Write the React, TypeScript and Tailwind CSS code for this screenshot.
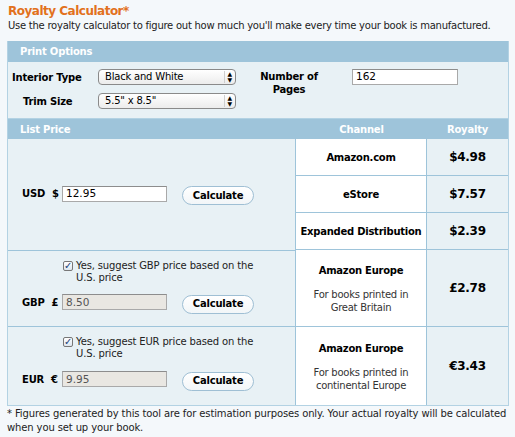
import { useState } from "react";

const font = { fontFamily: '"DejaVu Sans", Verdana, sans-serif' };

function Select({ value, width }: { value: string; width: string }) {
  return (
    <div
      className={`flex h-[16px] ${width} items-center justify-between rounded-[4px] border border-[#8a8a8a] bg-gradient-to-b from-white to-[#ececec] pl-[6px] pr-[3px] text-[10px] leading-none tracking-[-0.2px] text-black`}
    >
      <span>{value}</span>
      <span className="flex flex-col items-center border-l border-[#cfcfcf] pl-[3px] text-[6px] leading-[6px]">
        <span>▲</span>
        <span>▼</span>
      </span>
    </div>
  );
}

function CalcButton() {
  return (
    <button className="h-[19px] w-[72px] rounded-full border border-[#9fbfd4] bg-gradient-to-b from-white to-[#f2f6f8] text-[10px] font-bold leading-none tracking-[-0.2px] text-black">
      Calculate
    </button>
  );
}

function PriceInput({ value, disabled }: { value: string; disabled?: boolean }) {
  return (
    <div
      className={`flex h-[16px] w-[105px] items-center border border-[#a9a9a9] border-t-[#8d8d8d] px-[3px] text-[10.5px] leading-none ${
        disabled ? "bg-[#e9e7e2] text-[#555]" : "bg-white text-black"
      }`}
    >
      {value}
    </div>
  );
}

function Check({ text }: { text: string }) {
  return (
    <div className="flex gap-[3px] pl-[55px] text-[10px] leading-[12px] tracking-[-0.15px] text-[#222]">
      <span className="mt-[1px] flex h-[10px] w-[10px] shrink-0 items-center justify-center rounded-[2px] border border-[#777] bg-gradient-to-b from-white to-[#dde6ee] text-[10px] font-bold leading-none text-[#1a3f7a]">
        ✓
      </span>
      <span className="w-[185px]">{text}</span>
    </div>
  );
}

function PriceRow({ label, sym, value, disabled }: { label: string; sym: string; value: string; disabled?: boolean }) {
  return (
    <div className="flex items-center pl-[14px]">
      <span className="flex w-[40px] gap-[7px] whitespace-nowrap text-[10px] font-bold tracking-[-0.2px] text-black">
        <span>{label}</span>
        <span>{sym}</span>
      </span>
      <PriceInput value={value} disabled={disabled} />
      <div className="ml-[15px]">
        <CalcButton />
      </div>
    </div>
  );
}

const cellChannel =
  "flex items-center justify-center border-b border-r border-[#9ec4da] bg-white text-[10px] font-bold tracking-[-0.25px] text-black";
const cellRoyalty =
  "flex items-center justify-center border-b border-[#9ec4da] bg-[#e8f1f5] text-[12px] font-bold tracking-[-0.3px] text-black";
const headCell = "flex items-center bg-[#9ec4da] text-[10px] font-bold tracking-[-0.2px] text-white";

export default function App() {
  const [pages] = useState("162");

  return (
    <div style={font} className="h-[437px] w-[515px] overflow-hidden bg-[#f4f8fb] px-[7px] pt-[3px]">
      <h1 className="pl-[1px] text-[12px] font-bold leading-[16px] tracking-[-0.5px] text-[#e2711d]">
        Royalty Calculator*
      </h1>
      <p className="whitespace-nowrap pl-[1px] text-[10px] leading-[13px] tracking-[-0.25px] text-[#222]">
        Use the royalty calculator to figure out how much you'll make every time your book is manufactured.
      </p>

      <div className="mt-[9px] w-[502px] border-x border-b border-[#b3d2e3]">
        <div className={`${headCell} h-[21px] pl-[12px]`}>Print Options</div>
        <div className="flex h-[57px] border-b border-[#b3d2e3] bg-[#e8f1f5] pt-[7px]">
          <div className="flex flex-col gap-[8px]">
            <div className="flex items-center">
              <span className="w-[90px] pl-[4px] text-[10px] font-bold tracking-[-0.2px] text-black">Interior Type</span>
              <Select value="Black and White" width="w-[138px]" />
            </div>
            <div className="flex items-center">
              <span className="w-[90px] pl-[15px] text-[10px] font-bold tracking-[-0.2px] text-black">Trim Size</span>
              <Select value={'5.5" x 8.5"'} width="w-[138px]" />
            </div>
          </div>
          <div className="ml-[22px] w-[62px] pt-[1px] text-center text-[10px] font-bold leading-[13px] tracking-[-0.2px] text-black">
            Number of
            <br />
            Pages
          </div>
          <div className="ml-[32px] flex h-[16px] w-[106px] items-center border border-[#a9a9a9] border-t-[#8d8d8d] bg-white px-[3px] text-[10.5px] text-black">
            {pages}
          </div>
        </div>

        <div className="grid grid-cols-[288px_131px_81px] grid-rows-[20px_37px_37px_37px_77px_78px]">
          <div className={`${headCell} pl-[12px]`}>List Price</div>
          <div className={`${headCell} justify-center`}>Channel</div>
          <div className={`${headCell} justify-center`}>Royalty</div>

          <div className="row-span-3 flex items-center border-r border-[#9ec4da] bg-[#e8f1f5] pb-[2px]">
            <PriceRow label="USD" sym="$" value="12.95" />
          </div>
          <div className={cellChannel}>Amazon.com</div>
          <div className={cellRoyalty}>$4.98</div>
          <div className={cellChannel}>eStore</div>
          <div className={cellRoyalty}>$7.57</div>
          <div className={cellChannel}>Expanded Distribution</div>
          <div className={cellRoyalty}>$2.39</div>

          <div className="flex flex-col gap-[6px] border-y border-r border-[#9ec4da] bg-[#e8f1f5] pt-[9px]">
            <Check text="Yes, suggest GBP price based on the U.S. price" />
            <PriceRow label="GBP" sym="£" value="8.50" disabled />
          </div>
          <div className={`${cellChannel} flex-col font-normal`}>
            <span className="font-bold">Amazon Europe</span>
            <span className="mt-[10px] text-center leading-[13px] text-[#333]">
              For books printed in
              <br />
              Great Britain
            </span>
          </div>
          <div className={cellRoyalty}>£2.78</div>

          <div className="flex flex-col gap-[7px] border-r border-[#9ec4da] bg-[#e8f1f5] pt-[9px]">
            <Check text="Yes, suggest EUR price based on the U.S. price" />
            <PriceRow label="EUR" sym="€" value="9.95" disabled />
          </div>
          <div className={`${cellChannel} flex-col border-b-0 font-normal`}>
            <span className="font-bold">Amazon Europe</span>
            <span className="mt-[10px] text-center leading-[13px] text-[#333]">
              For books printed in
              <br />
              continental Europe
            </span>
          </div>
          <div className={`${cellRoyalty} border-b-0`}>€3.43</div>
        </div>
      </div>

      <p className="mt-[1px] whitespace-nowrap text-[10px] leading-[14px] tracking-[-0.12px] text-[#222]">
        * Figures generated by this tool are for estimation purposes only. Your actual royalty will be calculated
        <br />
        when you set up your book.
      </p>
    </div>
  );
}
